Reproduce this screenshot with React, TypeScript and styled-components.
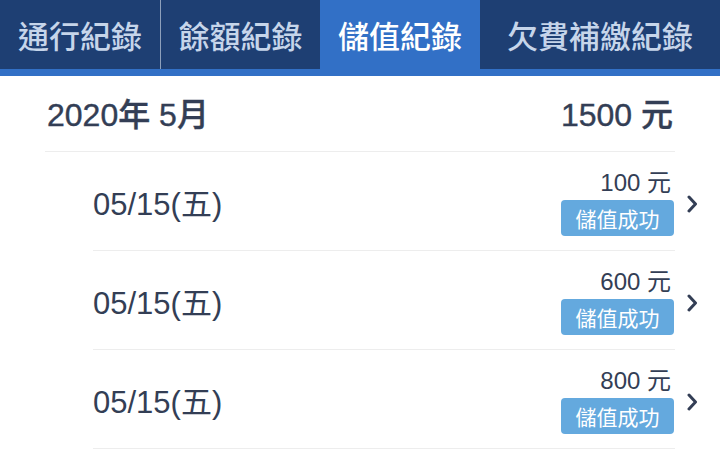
import React from "react";
import styled, { createGlobalStyle } from "styled-components";

const GlobalStyle = createGlobalStyle`
  html, body {
    margin: 0;
    padding: 0;
    background: #ffffff;
  }
  body {
    font-family: "Liberation Sans", "Noto Sans CJK TC", sans-serif;
    color: #333e55;
    -webkit-font-smoothing: antialiased;
  }
`;

const Page = styled.div`
  width: 720px;
  height: 473px;
  overflow: hidden;
  background: #fff;
`;

const TabBar = styled.div`
  display: flex;
  height: 69px;
  background: #1e3f73;
  border-bottom: 7px solid #3270c6;
`;

const Tab = styled.div<{ $width: number; $active?: boolean; $divider?: boolean }>`
  width: ${(p) => p.$width}px;
  display: flex;
  align-items: center;
  justify-content: center;
  font-family: "Noto Sans CJK TC", sans-serif;
  font-size: 31px;
  font-weight: 500;
  color: ${(p) => (p.$active ? "#ffffff" : "#c6d5ea")};
  background: ${(p) => (p.$active ? "#3270c6" : "transparent")};
  border-right: ${(p) => (p.$divider ? "1px solid #8ea0bb" : "none")};
  box-sizing: border-box;
`;

const MonthHeader = styled.div`
  display: flex;
  align-items: center;
  justify-content: space-between;
  height: 76px;
  margin: 0 45px;
  padding: 0 2px 4px 2px;
  box-sizing: border-box;
  border-bottom: 1px solid #ededed;
  font-size: 32px;
  font-weight: 500;
  -webkit-text-stroke: 0.4px #333e55;
  color: #333e55;
`;

const Row = styled.div`
  display: flex;
  align-items: stretch;
  padding-left: 93px;
`;

const RowBody = styled.div`
  flex: 1;
  height: 98px;
  display: flex;
  align-items: center;
  justify-content: space-between;
  border-bottom: 1px solid #ededed;
  padding-right: 1px;
`;

const DateText = styled.div`
  font-size: 31px;
  color: #333e55;
`;

const RightBlock = styled.div`
  display: flex;
  flex-direction: column;
  align-items: flex-end;
  gap: 4px;
  padding-top: 4px;
`;

const Amount = styled.div`
  font-size: 24px;
  line-height: 26px;
  padding-right: 3px;
  color: #333e55;
`;

const Badge = styled.div`
  width: 113px;
  height: 36px;
  border-radius: 4px;
  background: #64a9de;
  color: #fff;
  font-family: "Noto Sans CJK TC", sans-serif;
  font-size: 21px;
  display: flex;
  align-items: center;
  justify-content: center;
`;

const ChevronSlot = styled.div`
  width: 45px;
  display: flex;
  align-items: center;
  padding-left: 12px;
  padding-top: 4px;
  box-sizing: border-box;
`;

const Chevron = () => (
  <svg width="11" height="18" viewBox="0 0 11 18">
    <path
      d="M2 2 L8.5 9 L2 16"
      fill="none"
      stroke="#333e55"
      strokeWidth="3"
      strokeLinecap="round"
      strokeLinejoin="round"
    />
  </svg>
);

const tabs = [
  { label: "通行紀錄", width: 161, divider: true },
  { label: "餘額紀錄", width: 159 },
  { label: "儲值紀錄", width: 160, active: true },
  { label: "欠費補繳紀錄", width: 240 },
];

const records = [
  { date: "05/15(五)", amount: 100 },
  { date: "05/15(五)", amount: 600 },
  { date: "05/15(五)", amount: 800 },
];

const App = () => {
  return (
    <Page>
      <GlobalStyle />
      <TabBar>
        {tabs.map((t) => (
          <Tab key={t.label} $width={t.width} $active={t.active} $divider={t.divider}>
            {t.label}
          </Tab>
        ))}
      </TabBar>
      <MonthHeader>
        <span>2020年 5月</span>
        <span>1500 元</span>
      </MonthHeader>
      {records.map((r, i) => (
        <Row key={i}>
          <RowBody>
            <DateText>{r.date}</DateText>
            <RightBlock>
              <Amount>{r.amount} 元</Amount>
              <Badge>儲值成功</Badge>
            </RightBlock>
          </RowBody>
          <ChevronSlot>
            <Chevron />
          </ChevronSlot>
        </Row>
      ))}
    </Page>
  );
};

export default App;
